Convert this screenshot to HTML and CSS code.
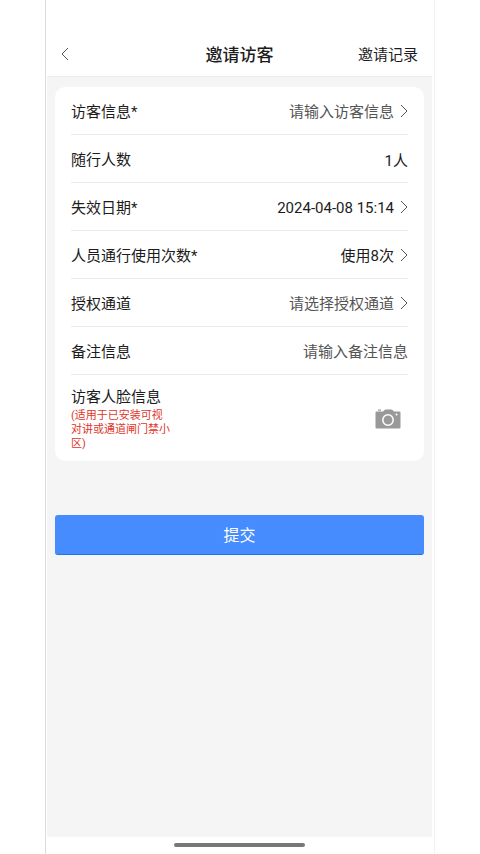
FILE: index.html
```html
<!DOCTYPE html>
<html lang="zh-CN">
<head>
<meta charset="utf-8">
<meta name="viewport" content="width=device-width, initial-scale=1">
<title>邀请访客</title>
<link rel="stylesheet" href="styles.css">
</head>
<body>
<div class="phone">
  <header class="header">
    <button class="back" type="button" aria-label="返回">
      <svg width="8" height="14" viewBox="0 0 8 14"><path d="M7 1 1 7l6 6"/></svg>
    </button>
    <h1 class="title">邀请访客</h1>
    <a class="records" href="#records">邀请记录</a>
  </header>
  <main class="main">
    <form class="form">
      <div class="card">
        <div class="row">
          <label class="label" for="visitor">访客信息*</label>
          <input class="value" id="visitor" type="text" placeholder="请输入访客信息">
          <svg class="arrow" width="8" height="14" viewBox="0 0 8 14"><path d="m1 1 6 6-6 6"/></svg>
        </div>
        <div class="row">
          <label class="label" for="count">随行人数</label>
          <input class="value" id="count" type="text" value="1人">
        </div>
        <div class="row">
          <label class="label" for="expiry">失效日期*</label>
          <input class="value" id="expiry" type="text" value="2024-04-08 15:14">
          <svg class="arrow" width="8" height="14" viewBox="0 0 8 14"><path d="m1 1 6 6-6 6"/></svg>
        </div>
        <div class="row">
          <label class="label" for="uses">人员通行使用次数*</label>
          <select class="value" id="uses"><option>使用8次</option></select>
          <svg class="arrow" width="8" height="14" viewBox="0 0 8 14"><path d="m1 1 6 6-6 6"/></svg>
        </div>
        <div class="row">
          <label class="label" for="channel">授权通道</label>
          <select class="value empty" id="channel"><option>请选择授权通道</option></select>
          <svg class="arrow" width="8" height="14" viewBox="0 0 8 14"><path d="m1 1 6 6-6 6"/></svg>
        </div>
        <div class="row">
          <label class="label" for="note">备注信息</label>
          <input class="value" id="note" type="text" placeholder="请输入备注信息">
        </div>
        <div class="row face">
          <div class="face-text">
            <label class="face-label" for="photo">访客人脸信息</label>
            <p class="hint">(适用于已安装可视对讲或通道闸门禁小区)</p>
          </div>
          <button class="camera" id="photo" type="button">
            <svg width="26" height="20" viewBox="0 0 26 20">
              <path class="body" d="M1.5 2.5H8L9.5 1q.5-.5 1.200-.5h5.600q.7 0 1.200.5L19 2.500h5.500q1 0 1 1v15q0 1-1 1h-23q-1 0-1-1v-15q0-1 1-1Z"/>
              <path class="body" d="M3 .5h3v1.200H3z"/>
              <circle class="lens" cx="13" cy="11" r="5.200"/>
              <circle class="dot" cx="21.500" cy="5.500" r="1"/>
            </svg>
          </button>
        </div>
      </div>
      <button class="submit" type="button">提交</button>
    </form>
  </main>
  <footer class="home"><div class="home-bar"></div></footer>
</div>
</body>
</html>
```
FILE: styles.css
```css
* {
  box-sizing: border-box;
}

body {
  margin: 0;
  background: #fff;
  color: #1c1c1c;
  font: 15px/20px Roboto, "Noto Sans CJK SC", sans-serif;
}

button,
input,
select {
  margin: 0;
  padding: 0;
  border: 0;
  background: none;
  color: inherit;
  font: inherit;
}

.phone {
  display: flex;
  flex-direction: column;
  min-height: 100vh;
  margin: 0 45px;
  padding: 0 2px 0 1px;
  border-left: 1px solid #dcdcdc;
  border-right: 1px solid #f2f2f2;
}

.header {
  display: grid;
  grid-template-columns: 1fr auto 1fr;
  align-items: center;
  height: 77px;
  padding: 32px 14px 0;
  border-bottom: 1px solid #ebebeb;
}

.back {
  display: flex;
  justify-self: start;
}

.back svg,
.arrow {
  fill: none;
  stroke: #555;
  stroke-width: 1;
}

.title,
.records,
.label,
.value {
  padding-top: 2px;
}

.title {
  margin: 0;
  font-size: 17px;
  font-weight: 500;
}

.records {
  justify-self: end;
  color: inherit;
  text-decoration: none;
}

.main {
  flex: 1;
  padding: 10px 8px;
  background: #f5f5f5;
}

.form {
  display: flex;
  flex-direction: column;
  gap: 54px;
}

.card {
  padding: 0 16px;
  border-radius: 10px;
  background: #fff;
}

.row {
  display: flex;
  align-items: center;
  height: 48px;
  border-bottom: 1px solid #ebebeb;
}

.label {
  flex: none;
}

.value {
  flex: 1;
  min-width: 0;
  height: 24px;
  appearance: none;
  text-align: right;
  text-align-last: right;
}

.value::placeholder,
.empty {
  color: #555;
  opacity: 1;
}

.arrow {
  flex: none;
  margin-left: 6px;
}

.face {
  justify-content: space-between;
  height: auto;
  padding: 12px 7px 10px 0;
  border-bottom: 0;
}

.face-text {
  width: 100px;
}

.hint {
  margin: 2px 0 0;
  color: #e0352b;
  font-size: 11px;
  line-height: 14px;
}

.camera {
  display: flex;
}

.body {
  fill: #999;
}

.lens {
  fill: none;
  stroke: #fff;
  stroke-width: 1.5;
}

.dot {
  fill: #fff;
}

.submit {
  height: 40px;
  padding-top: 3px;
  border-bottom: 1px solid #1677ee;
  border-radius: 3px;
  background: #468cff;
  color: #fff;
  font-size: 16px;
}

.home {
  display: flex;
  justify-content: center;
  height: 17px;
  padding-top: 6px;
}

.home-bar {
  width: 34%;
  height: 4px;
  border-radius: 2px;
  background: #777;
}
```
